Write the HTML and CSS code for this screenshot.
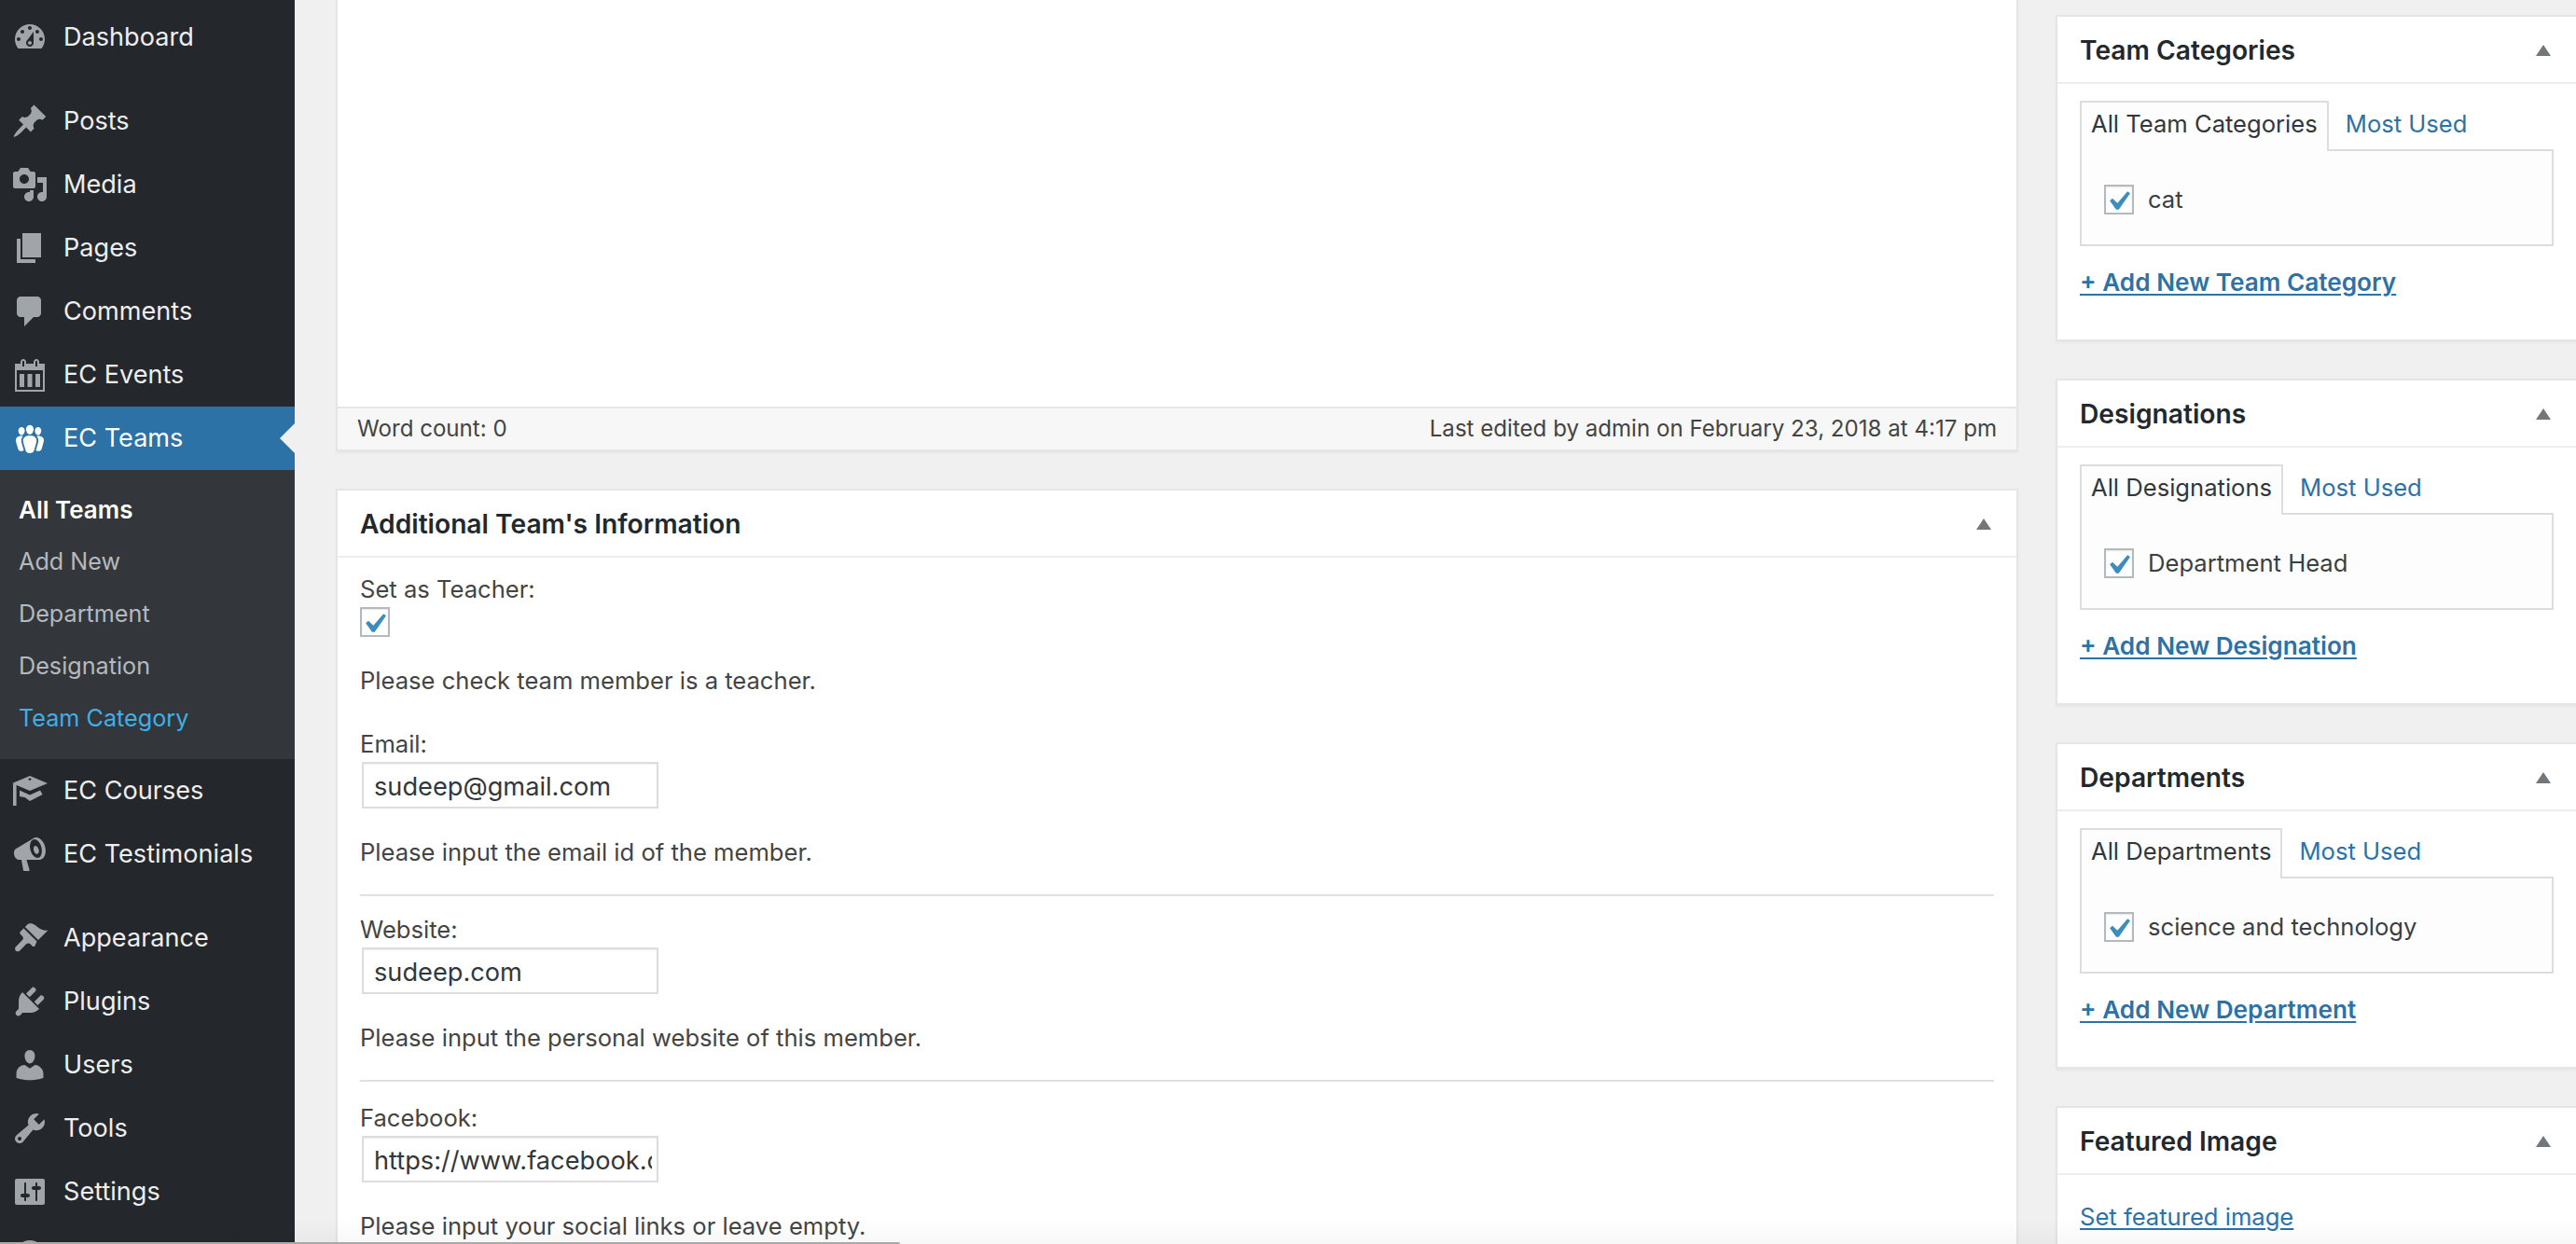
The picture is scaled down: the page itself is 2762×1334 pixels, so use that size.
FILE: index.html
```html
<!DOCTYPE html>
<html lang="en">
<head>
<meta charset="utf-8">
<title>Edit Team</title>
<link rel="stylesheet" href="styles.css">
</head>
<body>
<div class="page">
  <nav class="sidebar">
    <ul class="menu">
      <li class="item item-first"><svg class="ico" viewBox="0 0 20 20"><path fill-rule="evenodd" d="M3.76 16h12.48c1.1-1.37 1.76-3.11 1.76-5 0-4.42-3.58-8-8-8s-8 3.58-8 8c0 1.89.66 3.63 1.76 5zM10 4c.55 0 1 .45 1 1s-.45 1-1 1-1-.45-1-1 .45-1 1-1zM6 6c.55 0 1 .45 1 1s-.45 1-1 1-1-.45-1-1 .45-1 1-1zm8 0c.55 0 1 .45 1 1s-.45 1-1 1-1-.45-1-1 .45-1 1-1zm-5.37 5.55L12 7v6c0 1.1-.9 2-2 2s-2-.9-2-2c0-.57.24-1.08.63-1.45zM4 10c.55 0 1 .45 1 1s-.45 1-1 1-1-.45-1-1 .45-1 1-1zm12 0c.55 0 1 .45 1 1s-.45 1-1 1-1-.45-1-1 .45-1 1-1zm-5 3c0-.55-.45-1-1-1s-1 .45-1 1 .45 1 1 1 1-.45 1-1z"/></svg>Dashboard</li>
      <li class="item item-gap"><svg class="ico" viewBox="0 0 20 20"><path d="M10.44 3.02l1.82-1.82 6.36 6.35-1.83 1.82c-1.05-.68-2.48-.57-3.41.36l-.75.75c-.92.93-1.04 2.35-.35 3.41l-1.83 1.82-2.41-2.41-2.8 2.79c-.42.42-3.38 2.71-3.8 2.29s1.86-3.39 2.28-3.81l2.79-2.79L4.1 9.36l1.83-1.82c1.05.69 2.48.57 3.4-.36l.75-.75c.93-.92 1.05-2.35.36-3.41z"/></svg>Posts</li>
      <li class="item"><svg class="ico" viewBox="0 0 20 20"><path fill-rule="evenodd" d="M13 11V4c0-.55-.45-1-1-1h-1.67L9 1H5L3.67 3H2c-.55 0-1 .45-1 1v7c0 .55.45 1 1 1h10c.55 0 1-.45 1-1zM7 4.5c1.38 0 2.5 1.12 2.5 2.5S8.38 9.5 7 9.5 4.5 8.38 4.5 7 5.62 4.5 7 4.5zM14 6h5v10.5c0 1.38-1.12 2.5-2.5 2.5S14 17.88 14 16.5s1.12-2.5 2.5-2.5c.17 0 .34.02.5.05V9h-3V6zm-4 8.05V13h2v3.5c0 1.38-1.12 2.5-2.5 2.5S7 17.88 7 16.5 8.12 14 9.5 14c.17 0 .34.02.5.05z"/></svg>Media</li>
      <li class="item"><svg class="ico" viewBox="0 0 20 20"><path d="M6 15V2h10v13H6zm-1 1h8v2H3V5h2v11z"/></svg>Pages</li>
      <li class="item"><svg class="ico" viewBox="0 0 20 20"><path d="M5 2h9c1.1 0 2 .9 2 2v7c0 1.1-.9 2-2 2h-2l-5 5v-5H5c-1.1 0-2-.9-2-2V4c0-1.1.9-2 2-2z"/></svg>Comments</li>
      <li class="item"><svg class="ico" viewBox="0 0 20 20"><path fill-rule="evenodd" d="M15 4h3v15H2V4h3V3c0-.41.15-.76.44-1.06.29-.29.65-.44 1.06-.44s.77.15 1.06.44c.29.3.44.65.44 1.06v1h4V3c0-.41.15-.76.44-1.06.29-.29.65-.44 1.06-.44s.77.15 1.06.44c.29.3.44.65.44 1.06v1zM6 5.5h1V3c0-.14-.05-.26-.15-.36-.09-.09-.21-.14-.35-.14s-.26.05-.35.14c-.1.1-.15.22-.15.36v2.5zm7 0h1V3c0-.14-.05-.26-.15-.36-.09-.09-.21-.14-.35-.14s-.26.05-.35.14c-.1.1-.15.22-.15.36v2.5zM17 18V7.5H3V18h14zM4.5 9.5H7V16.500H4.500zm4.250 0h2.500V16.500h-2.500zm4.250 0h2.500V16.500H13z"/></svg>EC Events</li>
      <li class="item item-active"><svg class="ico" viewBox="0 0 20 20"><path d="M8.03 4.46c-.29 1.28.55 3.46 1.97 3.46 1.41 0 2.25-2.18 1.96-3.46-.22-.98-1.08-1.63-1.96-1.63-.89 0-1.74.65-1.97 1.63zm-4.13.9c-.25 1.08.47 2.93 1.67 2.93s1.92-1.85 1.67-2.93c-.19-.83-.92-1.39-1.67-1.39s-1.48.56-1.67 1.39zm8.86 0c-.25 1.08.47 2.93 1.66 2.93 1.2 0 1.92-1.85 1.67-2.93-.19-.83-.92-1.39-1.67-1.39-.74 0-1.47.56-1.66 1.39zm-.59 11.43l1.25-4.3C14.2 10 12.71 8.47 10 8.47c-2.72 0-4.21 1.53-3.44 4.02l1.26 4.3C8.05 17.51 9 18 10 18c.98 0 1.94-.49 2.17-1.21zm-6.1-7.63c-.49.67-.96 1.83-.42 3.59l1.12 3.79c-.34.2-.77.31-1.2.31-.85 0-1.65-.41-1.85-1.03l-1.07-3.65c-.65-2.11.61-3.4 2.92-3.4.27 0 .54.02.79.06-.1.1-.2.22-.29.33zm8.35-.39c2.31 0 3.58 1.29 2.92 3.4l-1.07 3.65c-.2.62-1 1.03-1.85 1.03-.43 0-.86-.11-1.2-.31l1.11-3.77c.55-1.78.08-2.94-.42-3.61-.08-.11-.18-.23-.28-.33.25-.04.51-.06.79-.06z"/></svg>EC Teams</li>
      <li>
        <ul class="submenu">
          <li class="sub sub-current">All Teams</li>
          <li class="sub">Add New</li>
          <li class="sub">Department</li>
          <li class="sub">Designation</li>
          <li class="sub sub-hover">Team Category</li>
        </ul>
      </li>
      <li class="item"><svg class="ico" viewBox="0 0 20 20"><path fill-rule="evenodd" d="M10 2l9.500 4-9.500 4-9.500-4zM9.200 3.800a.8.600 0 1 0 1.600 0 .8.600 0 1 0-1.600 0z"/><path d="M1 6.500h1.800V18H1zM4.500 9.800L10 12.200l5.500-2.400 1.300 2.200L10 15.500 7.500 13.600 4.500 13z"/></svg>EC Courses</li>
      <li class="item"><svg class="ico" viewBox="0 0 20 20"><path fill-rule="evenodd" d="M18.150 5.940c.46 1.620.38 3.220-.02 4.480-.42 1.280-1.260 2.180-2.300 2.480-.16.06-.26.06-.4.06-.06.02-.12.02-.18.02-.06.02-.14.02-.22.02H8.230l1.600 5.500c.02.14-.06.26-.14.34-.08.100-.24.160-.34.160H6.950c-.1 0-.26-.06-.34-.16-.08-.08-.16-.2-.14-.34l-1-5.500H4.250c-.5.060-1.080-.18-1.540-.62s-.88-1.080-1.060-1.880c-.24-.8-.2-1.560-.02-2.200.18-.62.58-1.080 1.060-1.300l9.020-5.420c.1-.06.18-.1.24-.16.06-.04.14-.08.24-.12.16-.08.28-.12.5-.18 1.040-.3 2.240.1 3.220.98s1.780 2.180 2.260 3.820zm-3.600 5.980c.4-.1.740-.34 1.040-.7.580-.7.860-1.760.86-3.040 0-.64-.1-1.300-.26-1.980-.34-1.360-1.020-2.500-1.780-3.240s-1.680-1.100-2.460-.88c-.82.220-1.400.96-1.700 2-.32 1.040-.28 2.360.06 3.720.38 1.360 1 2.500 1.800 3.240.78.740 1.620 1.100 2.440.88zM12.800 5.500c.9-.25 1.800 1 2.050 2.300.2 1.100-.2 2-1 2.100-.8.150-1.500-.9-1.750-2-.25-1.150 0-2.200.7-2.400z"/></svg>EC Testimonials</li>
      <li class="item item-gap"><svg class="ico" viewBox="0 0 20 20"><path d="M14.480 11.060L7.410 3.990l1.500-1.500c.5-.56 2.300-.47 3.510.32 1.210.8 1.430 1.280 2.910 2.100 1.180.64 2.450 1.260 4.450.85zm-.71.71L6.700 4.700 4.930 6.470c-.39.39-.39 1.020 0 1.410l1.060 1.060c.59.59.59 1.540 0 2.120l-3.530 3.530c-.59.59-.59 1.540 0 2.120.59.59 1.540.59 2.120 0l3.530-3.530c.59-.59 1.530-.59 2.120 0l1.060 1.060c.39.39 1.020.39 1.410 0z"/></svg>Appearance</li>
      <li class="item"><svg class="ico" viewBox="0 0 20 20"><path d="M13.110 4.360L9.870 7.600 8 5.730l3.240-3.240c.35-.34 1.050-.2 1.560.32.520.51.660 1.210.31 1.550zm-8 1.770l.91-1.120 9.010 9.010-1.190.84c-.71.71-2.630 1.160-3.820 1.160H6.140L4.900 17.260c-.59.59-1.540.59-2.120 0-.59-.58-.59-1.530 0-2.120l1.240-1.240v-3.880c0-1.130.4-3.190 1.090-3.890zm7.260 3.970l3.240-3.240c.34-.35 1.040-.21 1.550.31.520.51.660 1.210.31 1.550l-3.240 3.250z"/></svg>Plugins</li>
      <li class="item"><svg class="ico" viewBox="0 0 20 20"><path d="M10 9.250c-2.270 0-2.730-3.440-2.730-3.440C7 4.020 7.820 2 9.970 2c2.160 0 2.980 2.020 2.710 3.810 0 0-.41 3.440-2.680 3.440zm0 2.570L12.720 10c2.390 0 4.520 2.330 4.520 4.530v2.490s-3.650 1.130-7.240 1.130c-3.650 0-7.240-1.130-7.240-1.130v-2.490c0-2.250 1.940-4.480 4.470-4.480z"/></svg>Users</li>
      <li class="item"><svg class="ico" viewBox="0 0 20 20"><path fill-rule="evenodd" d="M16.680 9.770c-1.340 1.340-3.300 1.670-4.950.99l-5.410 6.520c-.99.99-2.590.99-3.580 0s-.99-2.59 0-3.570l6.520-5.420c-.68-1.650-.35-3.610.99-4.950 1.280-1.280 3.120-1.620 4.720-1.060l-2.890 2.890 2.820 2.820 2.860-2.870c.53 1.580.18 3.390-1.080 4.650zM3.810 16.210c.4.39 1.040.39 1.430 0 .4-.4.4-1.040 0-1.430-.39-.4-1.030-.4-1.430 0-.39.39-.39 1.030 0 1.430z"/></svg>Tools</li>
      <li class="item"><svg class="ico" viewBox="0 0 20 20"><path fill-rule="evenodd" d="M18 16V4c0-.55-.45-1-1-1H3c-.55 0-1 .45-1 1v12c0 .55.45 1 1 1h14c.55 0 1-.45 1-1zM8 11h1c.55 0 1 .45 1 1s-.45 1-1 1H8v1.500c0 .28-.22.5-.5.5s-.5-.22-.5-.5V13H6c-.55 0-1-.45-1-1s.45-1 1-1h1V5.500c0-.28.22-.5.5-.5s.5.22.5.5V11zm5-2h-1c-.55 0-1-.45-1-1s.45-1 1-1h1V5.500c0-.28.22-.5.5-.5s.5.22.5.5V7h1c.55 0 1 .45 1 1s-.45 1-1 1h-1v5.500c0 .28-.22.5-.5.5s-.5-.22-.5-.5V9z"/></svg>Settings</li>
      <li class="item"><svg class="ico" viewBox="0 0 20 20"><circle cx="10" cy="10" r="8"/></svg></li>
    </ul>
  </nav>

  <main class="content">
    <div class="col-main">
      <section class="editor">
        <div class="editor-canvas"></div>
        <div class="status"><span>Word count: 0</span><span>Last edited by admin on February 23, 2018 at 4:17 pm</span></div>
      </section>

      <section class="box box-info">
        <header class="box-head box-head-main"><h2 class="box-title">Additional Team's Information</h2><i class="caret"></i></header>
        <div class="info-body">
          <div class="lbl lbl-first">Set as Teacher:</div>
          <span class="check"><svg viewBox="0 0 20 20"><path d="M14.830 4.890l1.340.94-5.810 8.380H9.020L5.780 9.670l1.340-1.250 2.570 2.400z"/></svg></span>
          <p class="hint hint-first">Please check team member is a teacher.</p>
          <div class="lbl lbl-email">Email:</div>
          <input class="field" type="text" value="sudeep@gmail.com">
          <p class="hint">Please input the email id of the member.</p>
          <hr class="rule">
          <div class="lbl lbl-web">Website:</div>
          <input class="field" type="text" value="sudeep.com">
          <p class="hint">Please input the personal website of this member.</p>
          <hr class="rule">
          <div class="lbl lbl-fb">Facebook:</div>
          <input class="field" type="text" value="https://www.facebook.com/">
          <p class="hint">Please input your social links or leave empty.</p>
        </div>
      </section>
    </div>

    <aside class="col-side">
      <section class="box box-side">
        <header class="box-head"><h2 class="box-title">Team Categories</h2><i class="caret"></i></header>
        <div class="side-body">
          <div class="tabs"><span class="tab tab-on">All Team Categories</span><a class="tab">Most Used</a></div>
          <div class="panel"><span class="check"><svg viewBox="0 0 20 20"><path d="M14.830 4.890l1.340.94-5.810 8.380H9.020L5.780 9.670l1.340-1.250 2.570 2.400z"/></svg></span><span class="term">cat</span></div>
          <a class="add-link">+ Add New Team Category</a>
        </div>
      </section>
      <section class="box box-side">
        <header class="box-head"><h2 class="box-title">Designations</h2><i class="caret"></i></header>
        <div class="side-body">
          <div class="tabs"><span class="tab tab-on">All Designations</span><a class="tab">Most Used</a></div>
          <div class="panel"><span class="check"><svg viewBox="0 0 20 20"><path d="M14.830 4.890l1.340.94-5.810 8.380H9.020L5.780 9.670l1.340-1.250 2.570 2.400z"/></svg></span><span class="term">Department Head</span></div>
          <a class="add-link">+ Add New Designation</a>
        </div>
      </section>
      <section class="box box-side">
        <header class="box-head"><h2 class="box-title">Departments</h2><i class="caret"></i></header>
        <div class="side-body">
          <div class="tabs"><span class="tab tab-on">All Departments</span><a class="tab">Most Used</a></div>
          <div class="panel"><span class="check"><svg viewBox="0 0 20 20"><path d="M14.830 4.890l1.340.94-5.810 8.380H9.020L5.780 9.670l1.340-1.250 2.570 2.400z"/></svg></span><span class="term">science and technology</span></div>
          <a class="add-link">+ Add New Department</a>
        </div>
      </section>
      <section class="box box-side">
        <header class="box-head"><h2 class="box-title">Featured Image</h2><i class="caret"></i></header>
        <div class="feat-body"><a class="feat-link">Set featured image</a></div>
      </section>
    </aside>
  </main>
</div>
<div class="fade"></div>
<div class="hscroll"></div>
</body>
</html>
```
FILE: styles.css
```css
* { box-sizing: border-box; }
html, body { margin: 0; height: 1334px; overflow: hidden; }
body { position: relative; background: #f0f0f0; font-family: Inter, "Noto Sans", sans-serif; font-size: 25.6px; color: #444; }
.page { display: flex; height: 1334px; overflow: hidden; }

.sidebar { width: 316px; flex: none; background: #24282d; padding-top: 6px; }
.menu, .submenu { list-style: none; margin: 0; padding: 0; }
.item { position: relative; display: flex; align-items: center; height: 68px; padding: 0 0 2px 12px; color: #eee; font-size: 27.1px; }
.item-gap { margin-top: 22px; }
.ico { width: 40px; height: 40px; flex: none; margin: 2px 16px 0 0; fill: #a0a5aa; }
.item-active { background: #2c72a7; color: #fff; }
.item-active .ico { fill: #fff; }
.item-active::after { content: ""; position: absolute; right: 0; top: 50%; margin-top: -16px; border: 16px solid transparent; border-left: 0; border-right-color: #f0f0f0; }
.submenu { background: #33373c; padding: 15px 0; }
.sub { height: 56px; line-height: 55px; padding-left: 20px; font-size: 25.2px; color: #b4b9be; }
.sub-current { color: #fff; font-weight: 600; font-size: 26px; }
.sub-hover { color: #3fb0e4; }

.content { flex: 1; display: flex; min-width: 0; margin-left: 44px; gap: 40px; }
.col-main { width: 1804px; flex: none; }
.col-side { flex: 1; min-width: 0; padding-top: 16px; }

.editor { border: 2px solid #e5e5e5; border-top: 0; background: #fff; box-shadow: 0 2px 2px rgba(0,0,0,.04); }
.editor-canvas { height: 436px; }
.status { display: flex; justify-content: space-between; align-items: center; height: 46px; padding: 0 21px 2px 21px; background: #f7f7f7; border-top: 2px solid #e5e5e5; color: #444; font-size: 24.1px; }

.box { background: #fff; border: 2px solid #e5e5e5; box-shadow: 0 2px 2px rgba(0,0,0,.04); }
.box-info { margin-top: 40px; }
.box-side { height: 350px; margin-bottom: 40px; border-right: 0; }
.box-side:last-child { height: auto; margin-bottom: 0; }
.box-head { display: flex; justify-content: space-between; align-items: center; height: 72px; padding: 1px 27px 0 24px; border-bottom: 2px solid #eee; }
.box-title { margin: 0; font-size: 28.2px; font-weight: 600; color: #23282d; }
.caret { width: 0; height: 0; border-left: 8px solid transparent; border-right: 8px solid transparent; border-bottom: 12px solid #72777c; }

.info-body { padding: 15px 24px 0; height: 900px; }
.lbl { line-height: 38px; }
.lbl-first { height: 38px; }
.lbl-email { margin-top: 29px; }
.lbl-web { margin-top: 17px; }
.lbl-fb { margin-top: 20px; }
.hint { margin: 27px 0 0; line-height: 40px; }
.hint-first { margin-top: 27px; }
.check { display: inline-block; width: 32px; height: 32px; flex: none; border: 2px solid #b4b9be; background: #fff; box-shadow: inset 0 1px 2px rgba(0,0,0,.1); vertical-align: top; }
.check svg { display: block; width: 42px; height: 42px; margin: -5px 0 0 -8px; fill: #3b8dbd; }
.field { display: block; width: 318px; height: 50px; margin: 0 0 0 2px; padding: 2px 5px 0 11px; border: 2px solid #ddd; background: #fff; box-shadow: inset 0 1px 2px rgba(0,0,0,.07); font: 27.2px Inter, "Noto Sans", sans-serif; color: #32373c; outline: 0; }
.rule { height: 2px; margin: 25px 0 0; border: 0; background: #e0e0e0; }

.side-body { padding: 18px 24px 0; }
.tabs { display: flex; align-items: flex-start; height: 54px; margin-bottom: -2px; position: relative; }
.tab { height: 54px; line-height: 46px; padding: 2px 12px 0; color: #2c72a7; white-space: nowrap; }
.tab-on { padding: 0 10px; border: 2px solid #ddd; border-bottom: 0; background: #fdfdfd; color: #32373c; position: relative; z-index: 1; }
.tab-on + .tab { margin-left: 6px; }
.panel { display: flex; align-items: center; gap: 15px; height: 104px; padding: 4px 0 0 24px; border: 2px solid #ddd; background: #fdfdfd; color: #3a3f44; }
.term { margin-top: -2px; }
.add-link { display: block; width: max-content; margin-top: 19px; line-height: 40px; font-size: 26.2px; font-weight: 600; color: #2c72a7; text-decoration: underline; text-underline-offset: 3px; }
.feat-body { height: 120px; padding: 25px 24px 0; }
.feat-link { display: block; width: max-content; line-height: 40px; color: #2c72a7; text-decoration: underline; text-underline-offset: 3px; }

.fade { position: absolute; left: 0; right: 0; bottom: 0; height: 26px; background: linear-gradient(rgba(0,0,0,0), rgba(0,0,0,.03)); pointer-events: none; }
.hscroll { position: absolute; left: 0; bottom: 0; width: 965px; height: 2px; background: #a9a9a9; border-radius: 0 2px 0 0; }
```
